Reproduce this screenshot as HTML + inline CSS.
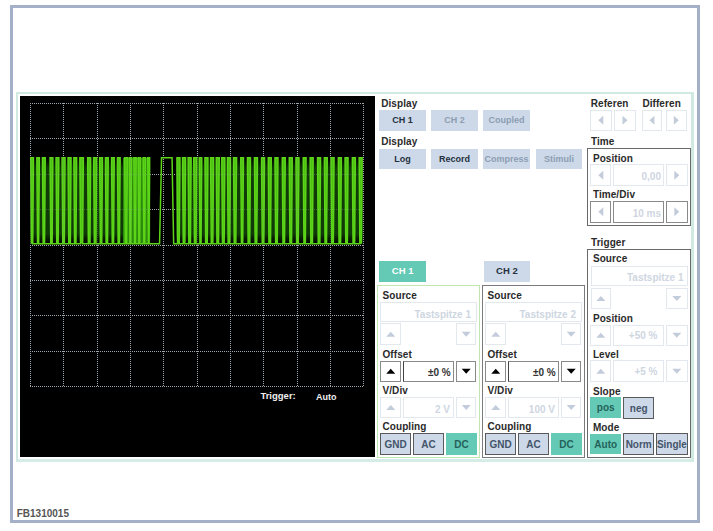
<!DOCTYPE html><html><head><meta charset="utf-8"><style>
html,body{margin:0;padding:0;background:#fff;width:713px;height:531px;overflow:hidden;position:relative;font-family:'Liberation Sans', sans-serif}
.t{position:absolute;white-space:nowrap;line-height:10px;font-family:'Liberation Sans', sans-serif}
.b{position:absolute;box-sizing:border-box;text-align:center;font-weight:bold;white-space:nowrap;font-family:'Liberation Sans', sans-serif}

</style></head><body>
<div style="position:absolute;left:10px;top:5px;width:690px;height:518px;box-sizing:border-box;border:3px solid #a3b0c8"></div>
<div style="position:absolute;left:16px;top:92px;width:678px;height:369.5px;box-sizing:border-box;border:2px solid #d0e9e1;border-bottom:3px solid #d6ece6;border-right-width:3px"></div>
<div style="position:absolute;left:20px;top:96px;width:355px;height:361px;box-sizing:border-box;background:#000"></div>
<svg width="713" height="531" style="position:absolute;left:0;top:0">
<defs><linearGradient id="gg" x1="0" y1="0" x2="0" y2="1"><stop offset="0" stop-color="#000"/><stop offset="0.12" stop-color="#103a08"/><stop offset="0.88" stop-color="#103a08"/><stop offset="1" stop-color="#000"/></linearGradient></defs>
<g stroke="#9ea6ae" stroke-width="1" stroke-dasharray="1 1" fill="none" shape-rendering="crispEdges"><line x1="30.50" y1="103" x2="30.50" y2="387"/><line x1="63.50" y1="103" x2="63.50" y2="387"/><line x1="97.50" y1="103" x2="97.50" y2="387"/><line x1="130.50" y1="103" x2="130.50" y2="387"/><line x1="163.50" y1="103" x2="163.50" y2="387"/><line x1="197.50" y1="103" x2="197.50" y2="387"/><line x1="230.50" y1="103" x2="230.50" y2="387"/><line x1="263.50" y1="103" x2="263.50" y2="387"/><line x1="297.50" y1="103" x2="297.50" y2="387"/><line x1="330.50" y1="103" x2="330.50" y2="387"/><line x1="363.50" y1="103" x2="363.50" y2="387"/><line x1="30" y1="103.50" x2="364" y2="103.50"/><line x1="30" y1="138.50" x2="364" y2="138.50"/><line x1="30" y1="174.50" x2="364" y2="174.50"/><line x1="30" y1="209.50" x2="364" y2="209.50"/><line x1="30" y1="245.50" x2="364" y2="245.50"/><line x1="30" y1="280.50" x2="364" y2="280.50"/><line x1="30" y1="315.50" x2="364" y2="315.50"/><line x1="30" y1="351.50" x2="364" y2="351.50"/><line x1="30" y1="386.50" x2="364" y2="386.50"/></g>
<path d="M30,157.8 L150.4,157.8 L150.4,243.8 L30,243.8 Z M176,157.8 L363,157.8 L363,243.8 L176,243.8 Z" fill="url(#gg)"/><rect x="123" y="157.8" width="27" height="86.0" fill="#2c8a0c"/>
<g fill="#4cc014"><polygon points="31.45,243.8 30.75,157.8 33.45,157.8 32.75,243.8"/><polygon points="37.55,243.8 36.85,157.8 39.35,157.8 38.65,243.8"/><polygon points="43.15,243.8 42.45,157.8 45.25,157.8 44.55,243.8"/><polygon points="50.75,243.8 50.05,157.8 52.85,157.8 52.15,243.8"/><polygon points="56.75,243.8 56.05,157.8 58.85,157.8 58.15,243.8"/><polygon points="62.75,243.8 62.05,157.8 65.05,157.8 64.35,243.8"/><polygon points="68.75,243.8 68.05,157.8 71.05,157.8 70.35,243.8"/><polygon points="74.55,243.8 73.85,157.8 76.65,157.8 75.95,243.8"/><polygon points="80.55,243.8 79.85,157.8 83.35,157.8 82.65,243.8"/><polygon points="88.35,243.8 87.65,157.8 90.65,157.8 89.95,243.8"/><polygon points="94.35,243.8 93.65,157.8 96.65,157.8 95.95,243.8"/><polygon points="100.35,243.8 99.65,157.8 102.45,157.8 101.75,243.8"/><polygon points="106.15,243.8 105.45,157.8 108.25,157.8 107.55,243.8"/><polygon points="112.25,243.8 111.55,157.8 114.25,157.8 113.55,243.8"/><polygon points="118.15,243.8 117.45,157.8 120.15,157.8 119.45,243.8"/><polygon points="125.35,243.8 124.65,157.8 127.35,157.8 126.65,243.8"/><polygon points="129.95,243.8 129.25,157.8 131.55,157.8 130.85,243.8"/><polygon points="134.55,243.8 133.85,157.8 136.15,157.8 135.45,243.8"/><polygon points="138.85,243.8 138.15,157.8 140.35,157.8 139.65,243.8"/><polygon points="143.85,243.8 143.15,157.8 145.45,157.8 144.75,243.8"/><polygon points="148.45,243.8 147.75,157.8 149.65,157.8 148.95,243.8"/><polygon points="177.65,243.8 176.95,157.8 179.95,157.8 179.25,243.8"/><polygon points="183.25,243.8 182.55,157.8 185.55,157.8 184.85,243.8"/><polygon points="188.85,243.8 188.15,157.8 191.15,157.8 190.45,243.8"/><polygon points="194.45,243.8 193.75,157.8 196.75,157.8 196.05,243.8"/><polygon points="199.95,243.8 199.25,157.8 201.75,157.8 201.05,243.8"/><polygon points="205.65,243.8 204.95,157.8 207.95,157.8 207.25,243.8"/><polygon points="211.25,243.8 210.55,157.8 213.55,157.8 212.85,243.8"/><polygon points="216.95,243.8 216.25,157.8 219.25,157.8 218.55,243.8"/><polygon points="222.45,243.8 221.75,157.8 224.85,157.8 224.15,243.8"/><polygon points="228.15,243.8 227.45,157.8 230.45,157.8 229.75,243.8"/><polygon points="234.25,243.8 233.55,157.8 236.55,157.8 235.85,243.8"/><polygon points="241.45,243.8 240.75,157.8 243.45,157.8 242.75,243.8"/><polygon points="248.15,243.8 247.45,157.8 250.45,157.8 249.75,243.8"/><polygon points="255.15,243.8 254.45,157.8 257.45,157.8 256.75,243.8"/><polygon points="262.25,243.8 261.55,157.8 264.55,157.8 263.85,243.8"/><polygon points="268.95,243.8 268.25,157.8 271.25,157.8 270.55,243.8"/><polygon points="275.65,243.8 274.95,157.8 277.95,157.8 277.25,243.8"/><polygon points="282.95,243.8 282.25,157.8 285.25,157.8 284.55,243.8"/><polygon points="289.95,243.8 289.25,157.8 292.25,157.8 291.55,243.8"/><polygon points="296.65,243.8 295.95,157.8 298.95,157.8 298.25,243.8"/><polygon points="303.95,243.8 303.25,157.8 306.05,157.8 305.35,243.8"/><polygon points="310.85,243.8 310.15,157.8 313.15,157.8 312.45,243.8"/><polygon points="318.25,243.8 317.55,157.8 320.55,157.8 319.85,243.8"/><polygon points="325.05,243.8 324.35,157.8 327.25,157.8 326.55,243.8"/><polygon points="331.75,243.8 331.05,157.8 334.05,157.8 333.35,243.8"/><polygon points="339.05,243.8 338.35,157.8 341.35,157.8 340.65,243.8"/><polygon points="345.75,243.8 345.05,157.8 348.05,157.8 347.35,243.8"/><polygon points="353.05,243.8 352.35,157.8 355.35,157.8 354.65,243.8"/><polygon points="359.85,243.8 359.15,157.8 362.15,157.8 361.45,243.8"/></g>
<path d="M31.45,243.8 L30.75,157.8 L33.45,157.8 L32.75,243.8 L37.55,243.8 L36.85,157.8 L39.35,157.8 L38.65,243.8 L43.15,243.8 L42.45,157.8 L45.25,157.8 L44.55,243.8 L50.75,243.8 L50.05,157.8 L52.85,157.8 L52.15,243.8 L56.75,243.8 L56.05,157.8 L58.85,157.8 L58.15,243.8 L62.75,243.8 L62.05,157.8 L65.05,157.8 L64.35,243.8 L68.75,243.8 L68.05,157.8 L71.05,157.8 L70.35,243.8 L74.55,243.8 L73.85,157.8 L76.65,157.8 L75.95,243.8 L80.55,243.8 L79.85,157.8 L83.35,157.8 L82.65,243.8 L88.35,243.8 L87.65,157.8 L90.65,157.8 L89.95,243.8 L94.35,243.8 L93.65,157.8 L96.65,157.8 L95.95,243.8 L100.35,243.8 L99.65,157.8 L102.45,157.8 L101.75,243.8 L106.15,243.8 L105.45,157.8 L108.25,157.8 L107.55,243.8 L112.25,243.8 L111.55,157.8 L114.25,157.8 L113.55,243.8 L118.15,243.8 L117.45,157.8 L120.15,157.8 L119.45,243.8 L125.35,243.8 L124.65,157.8 L127.35,157.8 L126.65,243.8 L129.95,243.8 L129.25,157.8 L131.55,157.8 L130.85,243.8 L134.55,243.8 L133.85,157.8 L136.15,157.8 L135.45,243.8 L138.85,243.8 L138.15,157.8 L140.35,157.8 L139.65,243.8 L143.85,243.8 L143.15,157.8 L145.45,157.8 L144.75,243.8 L148.45,243.8 L147.75,157.8 L149.65,157.8 L148.95,243.8 L159.55,243.8 L161.55,157.8 L172.05,157.8 L173.65,243.8 L177.65,243.8 L176.95,157.8 L179.95,157.8 L179.25,243.8 L183.25,243.8 L182.55,157.8 L185.55,157.8 L184.85,243.8 L188.85,243.8 L188.15,157.8 L191.15,157.8 L190.45,243.8 L194.45,243.8 L193.75,157.8 L196.75,157.8 L196.05,243.8 L199.95,243.8 L199.25,157.8 L201.75,157.8 L201.05,243.8 L205.65,243.8 L204.95,157.8 L207.95,157.8 L207.25,243.8 L211.25,243.8 L210.55,157.8 L213.55,157.8 L212.85,243.8 L216.95,243.8 L216.25,157.8 L219.25,157.8 L218.55,243.8 L222.45,243.8 L221.75,157.8 L224.85,157.8 L224.15,243.8 L228.15,243.8 L227.45,157.8 L230.45,157.8 L229.75,243.8 L234.25,243.8 L233.55,157.8 L236.55,157.8 L235.85,243.8 L241.45,243.8 L240.75,157.8 L243.45,157.8 L242.75,243.8 L248.15,243.8 L247.45,157.8 L250.45,157.8 L249.75,243.8 L255.15,243.8 L254.45,157.8 L257.45,157.8 L256.75,243.8 L262.25,243.8 L261.55,157.8 L264.55,157.8 L263.85,243.8 L268.95,243.8 L268.25,157.8 L271.25,157.8 L270.55,243.8 L275.65,243.8 L274.95,157.8 L277.95,157.8 L277.25,243.8 L282.95,243.8 L282.25,157.8 L285.25,157.8 L284.55,243.8 L289.95,243.8 L289.25,157.8 L292.25,157.8 L291.55,243.8 L296.65,243.8 L295.95,157.8 L298.95,157.8 L298.25,243.8 L303.95,243.8 L303.25,157.8 L306.05,157.8 L305.35,243.8 L310.85,243.8 L310.15,157.8 L313.15,157.8 L312.45,243.8 L318.25,243.8 L317.55,157.8 L320.55,157.8 L319.85,243.8 L325.05,243.8 L324.35,157.8 L327.25,157.8 L326.55,243.8 L331.75,243.8 L331.05,157.8 L334.05,157.8 L333.35,243.8 L339.05,243.8 L338.35,157.8 L341.35,157.8 L340.65,243.8 L345.75,243.8 L345.05,157.8 L348.05,157.8 L347.35,243.8 L353.05,243.8 L352.35,157.8 L355.35,157.8 L354.65,243.8 L359.85,243.8 L359.15,157.8 L362.15,157.8 L361.45,243.8 " fill="none" stroke="#5cd418" stroke-width="1.5" stroke-linejoin="miter"/>
<g stroke="#a0a8b0" stroke-opacity="0.3" stroke-width="1" stroke-dasharray="1 1" fill="none"><line x1="30.50" y1="103" x2="30.50" y2="387"/><line x1="63.50" y1="103" x2="63.50" y2="387"/><line x1="97.50" y1="103" x2="97.50" y2="387"/><line x1="130.50" y1="103" x2="130.50" y2="387"/><line x1="163.50" y1="103" x2="163.50" y2="387"/><line x1="197.50" y1="103" x2="197.50" y2="387"/><line x1="230.50" y1="103" x2="230.50" y2="387"/><line x1="263.50" y1="103" x2="263.50" y2="387"/><line x1="297.50" y1="103" x2="297.50" y2="387"/><line x1="330.50" y1="103" x2="330.50" y2="387"/><line x1="363.50" y1="103" x2="363.50" y2="387"/><line x1="30" y1="103.50" x2="364" y2="103.50"/><line x1="30" y1="138.50" x2="364" y2="138.50"/><line x1="30" y1="174.50" x2="364" y2="174.50"/><line x1="30" y1="209.50" x2="364" y2="209.50"/><line x1="30" y1="245.50" x2="364" y2="245.50"/><line x1="30" y1="280.50" x2="364" y2="280.50"/><line x1="30" y1="315.50" x2="364" y2="315.50"/><line x1="30" y1="351.50" x2="364" y2="351.50"/><line x1="30" y1="386.50" x2="364" y2="386.50"/></g>
</svg>
<div class="t" style="left:260.4px;top:391.40px;font-size:9.5px;color:#f0f0f0;font-weight:bold;letter-spacing:0px;">Trigger:</div>
<div class="t" style="left:315.9px;top:391.80px;font-size:9px;color:#f0f0f0;font-weight:bold;letter-spacing:0px;">Auto</div>
<div class="t" style="left:16.7px;top:509.30px;font-size:10px;color:#555555;font-weight:bold;letter-spacing:0px;">FB1310015</div>
<div class="t" style="left:381.2px;top:98.60px;font-size:10px;color:#2a2a2a;font-weight:bold;letter-spacing:0.08px;">Display</div>
<div class="b" style="left:379px;top:110px;width:47px;height:20.5px;background:#cdd9e8;color:#26313f;border:none;font-size:9px;line-height:20.5px;padding-top:0px">CH 1</div>
<div class="b" style="left:431px;top:110px;width:47px;height:20.5px;background:#cdd9e8;color:#8c9db3;border:none;font-size:9px;line-height:20.5px;padding-top:0px">CH 2</div>
<div class="b" style="left:483px;top:110px;width:47px;height:20.5px;background:#cdd9e8;color:#8c9db3;border:none;font-size:9px;line-height:20.5px;padding-top:0px">Coupled</div>
<div class="t" style="left:381.2px;top:137.30px;font-size:10px;color:#2a2a2a;font-weight:bold;letter-spacing:0.08px;">Display</div>
<div class="b" style="left:379px;top:149px;width:47px;height:20px;background:#cdd9e8;color:#26313f;border:none;font-size:9px;line-height:20px;padding-top:0px">Log</div>
<div class="b" style="left:431px;top:149px;width:47px;height:20px;background:#cdd9e8;color:#26313f;border:none;font-size:9px;line-height:20px;padding-top:0px">Record</div>
<div class="b" style="left:483px;top:149px;width:47px;height:20px;background:#cdd9e8;color:#8c9db3;border:none;font-size:9px;line-height:20px;padding-top:0px">Compress</div>
<div class="b" style="left:536px;top:149px;width:46px;height:20px;background:#cdd9e8;color:#8c9db3;border:none;font-size:9px;line-height:20px;padding-top:0px">Stimuli</div>
<div class="t" style="left:590.6999999999999px;top:98.50px;font-size:10px;color:#2a2a2a;font-weight:bold;letter-spacing:0.08px;">Referen</div>
<div class="t" style="left:642.4px;top:98.50px;font-size:10px;color:#2a2a2a;font-weight:bold;letter-spacing:0.08px;">Differen</div>
<div style="position:absolute;left:590px;top:109.7px;width:21.600000000000023px;height:21.299999999999997px;box-sizing:border-box;border:1px solid #e3e7ee;background:#fff"></div>
<svg style="position:absolute;left:0;top:0" width="713" height="531"><polygon points="603.3,115.85 603.3,124.85 598.3,120.35" fill="#c2ccda"/></svg>
<div style="position:absolute;left:614px;top:109.7px;width:22px;height:21.299999999999997px;box-sizing:border-box;border:1px solid #e3e7ee;background:#fff"></div>
<svg style="position:absolute;left:0;top:0" width="713" height="531"><polygon points="622.5,115.85 622.5,124.85 627.5,120.35" fill="#c2ccda"/></svg>
<div style="position:absolute;left:641.5px;top:109.7px;width:20.899999999999977px;height:21.299999999999997px;box-sizing:border-box;border:1px solid #e3e7ee;background:#fff"></div>
<svg style="position:absolute;left:0;top:0" width="713" height="531"><polygon points="654.45,115.85 654.45,124.85 649.45,120.35" fill="#c2ccda"/></svg>
<div style="position:absolute;left:665.6px;top:109.7px;width:21.399999999999977px;height:21.299999999999997px;box-sizing:border-box;border:1px solid #e3e7ee;background:#fff"></div>
<svg style="position:absolute;left:0;top:0" width="713" height="531"><polygon points="673.8,115.85 673.8,124.85 678.8,120.35" fill="#c2ccda"/></svg>
<div class="t" style="left:591.0px;top:137.30px;font-size:10px;color:#2a2a2a;font-weight:bold;letter-spacing:0.08px;">Time</div>
<div style="position:absolute;left:587px;top:148.4px;width:104px;height:77.6px;box-sizing:border-box;border:1px solid #6a6a6a"></div>
<div class="t" style="left:592.9px;top:153.80px;font-size:10px;color:#2a2a2a;font-weight:bold;letter-spacing:0.08px;">Position</div>
<div style="position:absolute;left:590.3px;top:164.4px;width:21.0px;height:21.599999999999994px;box-sizing:border-box;border:1px solid #e3e7ee;background:#fff"></div>
<svg style="position:absolute;left:0;top:0" width="713" height="531"><polygon points="603.3,170.7 603.3,179.7 598.3,175.2" fill="#c2ccda"/></svg>
<div style="position:absolute;left:613.2px;top:164.4px;width:50.5px;height:21.599999999999994px;box-sizing:border-box;border:1px solid #e3e7ee"></div>
<div class="t" style="left:592.9px;top:190.30px;font-size:10px;color:#2a2a2a;font-weight:bold;letter-spacing:0.08px;">Time/Div</div>
<div style="position:absolute;left:590.3px;top:201px;width:21.0px;height:21.599999999999994px;box-sizing:border-box;border:1px solid #8a8a8a;background:#fff"></div>
<svg style="position:absolute;left:0;top:0" width="713" height="531"><polygon points="603.3,207.3 603.3,216.3 598.3,211.8" fill="#c2ccda"/></svg>
<div style="position:absolute;left:613.2px;top:201px;width:50.5px;height:21.599999999999994px;box-sizing:border-box;border:1px solid #8a8a8a"></div>
<div style="position:absolute;left:666px;top:164.4px;width:21.600000000000023px;height:21.599999999999994px;box-sizing:border-box;border:1px solid #e3e7ee;background:#fff"></div>
<svg style="position:absolute;left:0;top:0" width="713" height="531"><polygon points="674.3,170.7 674.3,179.7 679.3,175.2" fill="#c2ccda"/></svg>
<div style="position:absolute;left:666px;top:201px;width:21.600000000000023px;height:21.599999999999994px;box-sizing:border-box;border:1px solid #8a8a8a;background:#fff"></div>
<svg style="position:absolute;left:0;top:0" width="713" height="531"><polygon points="674.3,207.3 674.3,216.3 679.3,211.8" fill="#c2ccda"/></svg>
<div class="t" style="left:561px;width:100px;text-align:right;top:172.00px;font-size:10px;font-weight:bold;color:#ced6e1">0,00</div>
<div class="t" style="left:561px;width:100px;text-align:right;top:208.70px;font-size:10px;font-weight:bold;color:#ced6e1">10 ms</div>
<div class="t" style="left:591.0px;top:238.00px;font-size:10px;color:#2a2a2a;font-weight:bold;letter-spacing:0.08px;">Trigger</div>
<div style="position:absolute;left:587px;top:249px;width:104px;height:209px;box-sizing:border-box;border:1px solid #6a6a6a"></div>
<div class="t" style="left:592.9px;top:254.20px;font-size:10px;color:#2a2a2a;font-weight:bold;letter-spacing:0.08px;">Source</div>
<div style="position:absolute;left:590.6px;top:265.5px;width:97.0px;height:20.69999999999999px;box-sizing:border-box;border:1px solid #e3e7ee"></div>
<div class="t" style="left:583.5px;width:100px;text-align:right;top:272.70px;font-size:10px;font-weight:bold;color:#ced6e1">Tastspitze 1</div>
<div style="position:absolute;left:590.6px;top:288px;width:20.699999999999932px;height:20.80000000000001px;box-sizing:border-box;border:1px solid #e3e7ee;background:#fff"></div>
<svg style="position:absolute;left:0;top:0" width="713" height="531"><polygon points="596.45,300.9 605.45,300.9 600.95,295.9" fill="#c2ccda"/></svg>
<div style="position:absolute;left:666px;top:288px;width:21.600000000000023px;height:20.80000000000001px;box-sizing:border-box;border:1px solid #e3e7ee;background:#fff"></div>
<svg style="position:absolute;left:0;top:0" width="713" height="531"><polygon points="672.3,295.9 681.3,295.9 676.8,300.9" fill="#c2ccda"/></svg>
<div class="t" style="left:592.9px;top:314.00px;font-size:10px;color:#2a2a2a;font-weight:bold;letter-spacing:0.08px;">Position</div>
<div style="position:absolute;left:590.3px;top:324.7px;width:21.0px;height:21.100000000000023px;box-sizing:border-box;border:1px solid #e3e7ee;background:#fff"></div>
<svg style="position:absolute;left:0;top:0" width="713" height="531"><polygon points="596.3,337.75 605.3,337.75 600.8,332.75" fill="#c2ccda"/></svg>
<div style="position:absolute;left:613.2px;top:324.7px;width:50.5px;height:21.100000000000023px;box-sizing:border-box;border:1px solid #e3e7ee"></div>
<div style="position:absolute;left:666px;top:324.7px;width:21.600000000000023px;height:21.100000000000023px;box-sizing:border-box;border:1px solid #e3e7ee;background:#fff"></div>
<svg style="position:absolute;left:0;top:0" width="713" height="531"><polygon points="672.3,332.75 681.3,332.75 676.8,337.75" fill="#c2ccda"/></svg>
<div class="t" style="left:557.5px;width:100px;text-align:right;top:331.20px;font-size:10px;font-weight:bold;color:#ced6e1">+50 %</div>
<div class="t" style="left:592.9px;top:350.20px;font-size:10px;color:#2a2a2a;font-weight:bold;letter-spacing:0.08px;">Level</div>
<div style="position:absolute;left:590.3px;top:360.4px;width:21.0px;height:21.700000000000045px;box-sizing:border-box;border:1px solid #e3e7ee;background:#fff"></div>
<svg style="position:absolute;left:0;top:0" width="713" height="531"><polygon points="596.3,373.75 605.3,373.75 600.8,368.75" fill="#c2ccda"/></svg>
<div style="position:absolute;left:613.2px;top:360.4px;width:50.5px;height:21.700000000000045px;box-sizing:border-box;border:1px solid #e3e7ee"></div>
<div style="position:absolute;left:666px;top:360.4px;width:21.600000000000023px;height:21.700000000000045px;box-sizing:border-box;border:1px solid #e3e7ee;background:#fff"></div>
<svg style="position:absolute;left:0;top:0" width="713" height="531"><polygon points="672.3,368.75 681.3,368.75 676.8,373.75" fill="#c2ccda"/></svg>
<div class="t" style="left:557.5px;width:100px;text-align:right;top:367.20px;font-size:10px;font-weight:bold;color:#ced6e1">+5 %</div>
<div class="t" style="left:592.9px;top:386.50px;font-size:10px;color:#2a2a2a;font-weight:bold;letter-spacing:0.08px;">Slope</div>
<div class="b" style="left:590.4px;top:397.3px;width:30.600000000000023px;height:20.399999999999977px;background:#64cab6;color:#24625a;border:none;font-size:10px;line-height:20.399999999999977px;padding-top:1px">pos</div>
<div class="b" style="left:623.2px;top:397.3px;width:31.0px;height:21.399999999999977px;background:#cdd9e8;color:#44546a;border:1.5px solid #5a5a5a;font-size:10px;line-height:21.399999999999977px;padding-top:0px">neg</div>
<div class="t" style="left:592.9px;top:422.60px;font-size:10px;color:#2a2a2a;font-weight:bold;letter-spacing:0.08px;">Mode</div>
<div class="b" style="left:590.4px;top:433.9px;width:30.600000000000023px;height:20.400000000000034px;background:#64cab6;color:#24625a;border:none;font-size:10px;line-height:20.400000000000034px;padding-top:1px">Auto</div>
<div class="b" style="left:623.2px;top:433px;width:31.0px;height:21.600000000000023px;background:#cdd9e8;color:#44546a;border:1.5px solid #5a5a5a;font-size:10px;line-height:21.600000000000023px;padding-top:0px">Norm</div>
<div class="b" style="left:655.9px;top:433px;width:31.700000000000045px;height:21.600000000000023px;background:#cdd9e8;color:#44546a;border:1.5px solid #5a5a5a;font-size:10px;line-height:21.600000000000023px;padding-top:0px">Single</div>
<div class="b" style="left:379.3px;top:261px;width:46.69999999999999px;height:20.600000000000023px;background:#64cab6;color:#ffffff;border:none;font-size:9.5px;line-height:20.600000000000023px;padding-top:0px">CH 1</div>
<div style="position:absolute;left:377px;top:285.4px;width:103px;height:172.60000000000002px;box-sizing:border-box;border:1px solid #bfe6b0"></div>
<div class="t" style="left:382.5px;top:290.50px;font-size:10px;color:#2a2a2a;font-weight:bold;letter-spacing:0.08px;">Source</div>
<div style="position:absolute;left:380.4px;top:302px;width:96.60000000000002px;height:20.399999999999977px;box-sizing:border-box;border:1px solid #e3e7ee"></div>
<div class="t" style="left:371px;width:100px;text-align:right;top:310.20px;font-size:10px;font-weight:bold;color:#ced6e1">Tastspitze 1</div>
<div style="position:absolute;left:380.4px;top:323.4px;width:20.700000000000045px;height:21.900000000000034px;box-sizing:border-box;border:1px solid #e3e7ee;background:#fff"></div>
<svg style="position:absolute;left:0;top:0" width="713" height="531"><polygon points="386.25,336.85 395.25,336.85 390.75,331.85" fill="#c2ccda"/></svg>
<div style="position:absolute;left:456px;top:323.4px;width:20.399999999999977px;height:21.900000000000034px;box-sizing:border-box;border:1px solid #e3e7ee;background:#fff"></div>
<svg style="position:absolute;left:0;top:0" width="713" height="531"><polygon points="461.7,331.85 470.7,331.85 466.2,336.85" fill="#c2ccda"/></svg>
<div class="t" style="left:382.5px;top:350.20px;font-size:10px;color:#2a2a2a;font-weight:bold;letter-spacing:0.08px;">Offset</div>
<div style="position:absolute;left:380.4px;top:360.5px;width:20.700000000000045px;height:21.5px;box-sizing:border-box;border:1px solid #8a8a8a;background:#fff"></div>
<svg style="position:absolute;left:0;top:0" width="713" height="531"><polygon points="386.25,373.75 395.25,373.75 390.75,368.75" fill="#000"/></svg>
<div style="position:absolute;left:403.3px;top:360.5px;width:50.39999999999998px;height:21.5px;box-sizing:border-box;border:1px solid #8a8a8a;border-left:1.5px solid #444"></div>
<div class="t" style="left:350.7px;width:100px;text-align:right;top:367.70px;font-size:10px;font-weight:bold;color:#333">±0 %</div>
<div style="position:absolute;left:456px;top:360.5px;width:20.399999999999977px;height:21.5px;box-sizing:border-box;border:1px solid #8a8a8a;background:#fff"></div>
<svg style="position:absolute;left:0;top:0" width="713" height="531"><polygon points="461.7,368.75 470.7,368.75 466.2,373.75" fill="#000"/></svg>
<div class="t" style="left:382.5px;top:386.00px;font-size:10px;color:#2a2a2a;font-weight:bold;letter-spacing:0.08px;">V/Div</div>
<div style="position:absolute;left:380.4px;top:397px;width:20.700000000000045px;height:21.100000000000023px;box-sizing:border-box;border:1px solid #e3e7ee;background:#fff"></div>
<svg style="position:absolute;left:0;top:0" width="713" height="531"><polygon points="386.25,410.05 395.25,410.05 390.75,405.05" fill="#c2ccda"/></svg>
<div style="position:absolute;left:403.3px;top:397px;width:50.39999999999998px;height:21.100000000000023px;box-sizing:border-box;border:1px solid #e3e7ee"></div>
<div style="position:absolute;left:456px;top:397px;width:20.399999999999977px;height:21.100000000000023px;box-sizing:border-box;border:1px solid #e3e7ee;background:#fff"></div>
<svg style="position:absolute;left:0;top:0" width="713" height="531"><polygon points="461.7,405.05 470.7,405.05 466.2,410.05" fill="#c2ccda"/></svg>
<div class="t" style="left:350px;width:100px;text-align:right;top:405.20px;font-size:10px;font-weight:bold;color:#ced6e1">2 V</div>
<div class="t" style="left:382.5px;top:422.30px;font-size:10px;color:#2a2a2a;font-weight:bold;letter-spacing:0.08px;">Coupling</div>
<div class="b" style="left:380.2px;top:433.4px;width:30.80000000000001px;height:21.200000000000045px;background:#cdd9e8;color:#44546a;border:1.5px solid #5a5a5a;font-size:10px;line-height:21.200000000000045px;padding-top:0px">GND</div>
<div class="b" style="left:413.2px;top:433.4px;width:30.5px;height:21.200000000000045px;background:#cdd9e8;color:#44546a;border:1.5px solid #5a5a5a;font-size:10px;line-height:21.200000000000045px;padding-top:0px">AC</div>
<div class="b" style="left:446.3px;top:433.4px;width:30.5px;height:21.200000000000045px;background:#64cab6;color:#24625a;border:none;font-size:10px;line-height:21.200000000000045px;padding-top:0.5px">DC</div>
<div class="b" style="left:483.5px;top:261px;width:46.700000000000045px;height:20.600000000000023px;background:#cdd9e8;color:#26313f;border:none;font-size:9.5px;line-height:20.600000000000023px;padding-top:0px">CH 2</div>
<div style="position:absolute;left:482px;top:285.4px;width:103px;height:172.60000000000002px;box-sizing:border-box;border:1px solid #7a7a7a"></div>
<div class="t" style="left:487.5px;top:290.50px;font-size:10px;color:#2a2a2a;font-weight:bold;letter-spacing:0.08px;">Source</div>
<div style="position:absolute;left:485.4px;top:302px;width:96.60000000000002px;height:20.399999999999977px;box-sizing:border-box;border:1px solid #e3e7ee"></div>
<div class="t" style="left:476px;width:100px;text-align:right;top:310.20px;font-size:10px;font-weight:bold;color:#ced6e1">Tastspitze 2</div>
<div style="position:absolute;left:485.4px;top:323.4px;width:20.700000000000045px;height:21.900000000000034px;box-sizing:border-box;border:1px solid #e3e7ee;background:#fff"></div>
<svg style="position:absolute;left:0;top:0" width="713" height="531"><polygon points="491.25,336.85 500.25,336.85 495.75,331.85" fill="#c2ccda"/></svg>
<div style="position:absolute;left:561px;top:323.4px;width:20.399999999999977px;height:21.900000000000034px;box-sizing:border-box;border:1px solid #e3e7ee;background:#fff"></div>
<svg style="position:absolute;left:0;top:0" width="713" height="531"><polygon points="566.7,331.85 575.7,331.85 571.2,336.85" fill="#c2ccda"/></svg>
<div class="t" style="left:487.5px;top:350.20px;font-size:10px;color:#2a2a2a;font-weight:bold;letter-spacing:0.08px;">Offset</div>
<div style="position:absolute;left:485.4px;top:360.5px;width:20.700000000000045px;height:21.5px;box-sizing:border-box;border:1px solid #8a8a8a;background:#fff"></div>
<svg style="position:absolute;left:0;top:0" width="713" height="531"><polygon points="491.25,373.75 500.25,373.75 495.75,368.75" fill="#000"/></svg>
<div style="position:absolute;left:508.3px;top:360.5px;width:50.400000000000034px;height:21.5px;box-sizing:border-box;border:1px solid #8a8a8a;border-left:1.5px solid #444"></div>
<div class="t" style="left:455.7px;width:100px;text-align:right;top:367.70px;font-size:10px;font-weight:bold;color:#333">±0 %</div>
<div style="position:absolute;left:561px;top:360.5px;width:20.399999999999977px;height:21.5px;box-sizing:border-box;border:1px solid #8a8a8a;background:#fff"></div>
<svg style="position:absolute;left:0;top:0" width="713" height="531"><polygon points="566.7,368.75 575.7,368.75 571.2,373.75" fill="#000"/></svg>
<div class="t" style="left:487.5px;top:386.00px;font-size:10px;color:#2a2a2a;font-weight:bold;letter-spacing:0.08px;">V/Div</div>
<div style="position:absolute;left:485.4px;top:397px;width:20.700000000000045px;height:21.100000000000023px;box-sizing:border-box;border:1px solid #e3e7ee;background:#fff"></div>
<svg style="position:absolute;left:0;top:0" width="713" height="531"><polygon points="491.25,410.05 500.25,410.05 495.75,405.05" fill="#c2ccda"/></svg>
<div style="position:absolute;left:508.3px;top:397px;width:50.400000000000034px;height:21.100000000000023px;box-sizing:border-box;border:1px solid #e3e7ee"></div>
<div style="position:absolute;left:561px;top:397px;width:20.399999999999977px;height:21.100000000000023px;box-sizing:border-box;border:1px solid #e3e7ee;background:#fff"></div>
<svg style="position:absolute;left:0;top:0" width="713" height="531"><polygon points="566.7,405.05 575.7,405.05 571.2,410.05" fill="#c2ccda"/></svg>
<div class="t" style="left:455px;width:100px;text-align:right;top:405.20px;font-size:10px;font-weight:bold;color:#ced6e1">100 V</div>
<div class="t" style="left:487.5px;top:422.30px;font-size:10px;color:#2a2a2a;font-weight:bold;letter-spacing:0.08px;">Coupling</div>
<div class="b" style="left:485.2px;top:433.4px;width:30.80000000000001px;height:21.200000000000045px;background:#cdd9e8;color:#44546a;border:1.5px solid #5a5a5a;font-size:10px;line-height:21.200000000000045px;padding-top:0px">GND</div>
<div class="b" style="left:518.2px;top:433.4px;width:30.5px;height:21.200000000000045px;background:#cdd9e8;color:#44546a;border:1.5px solid #5a5a5a;font-size:10px;line-height:21.200000000000045px;padding-top:0px">AC</div>
<div class="b" style="left:551.3px;top:433.4px;width:30.5px;height:21.200000000000045px;background:#64cab6;color:#24625a;border:none;font-size:10px;line-height:21.200000000000045px;padding-top:0.5px">DC</div>
</body></html>
